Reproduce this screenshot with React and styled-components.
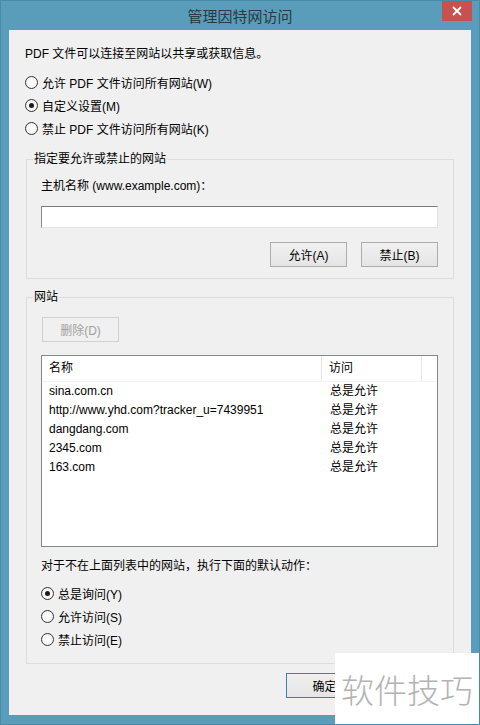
import React from 'react'
import styled, { createGlobalStyle } from 'styled-components';

const GlobalStyle = createGlobalStyle`
  html, body {
    margin: 0;
    padding: 0;
  }
  body {
    background: #5a9dba;
    font-family: "Liberation Sans", "Noto Sans CJK SC", sans-serif;
  }
`

const sites = [
  { name: 'sina.com.cn', access: '总是允许' },
  { name: 'http://www.yhd.com?tracker_u=7439951', access: '总是允许' },
  { name: 'dangdang.com', access: '总是允许' },
  { name: '2345.com', access: '总是允许' },
  { name: '163.com', access: '总是允许' },
];

const RadioOption = ({ checked, children }) => (
  <SRadioRow>
    <SRadio $checked={checked} />
    <span>{children}</span>
  </SRadioRow>
);

export default function App() {
  return (
    <>
      <GlobalStyle />
      <SWindow>
        <STitleBar>
          <span />
          <STitle>管理因特网访问</STitle>
          <SClose>
            <svg width="10" height="10" viewBox="0 0 10 10">
              <path d="M1 1 L9 9 M9 1 L1 9" stroke="#fff" strokeWidth="1.8" />
            </svg>
          </SClose>
        </STitleBar>
        <SClient>
          <SText>PDF 文件可以连接至网站以共享或获取信息。</SText>
          <SRadioList $top={9}>
            <RadioOption>允许 PDF 文件访问所有网站(W)</RadioOption>
            <RadioOption checked>自定义设置(M)</RadioOption>
            <RadioOption>禁止 PDF 文件访问所有网站(K)</RadioOption>
          </SRadioList>

          <SGroup $top={19} $bottom={11}>
            <SLegend>指定要允许或禁止的网站</SLegend>
            <SText $top={11}>主机名称 (www.example.com)：</SText>
            <SInput type="text" />
            <SButtonRow $top={14}>
              <SButton>允许(A)</SButton>
              <SButton>禁止(B)</SButton>
            </SButtonRow>
          </SGroup>

          <SGroup $top={18} $bottom={12}>
            <SLegend>网站</SLegend>
            <SButtonRow $top={12} $start>
              <SButton disabled>删除(D)</SButton>
            </SButtonRow>
            <SListBox>
              <SListHeader>
                <SHeadCell>名称</SHeadCell>
                <SHeadCell>访问</SHeadCell>
                <span />
              </SListHeader>
              {sites.map((site) => (
                <SListRow key={site.name}>
                  <SCell>{site.name}</SCell>
                  <SCell>{site.access}</SCell>
                </SListRow>
              ))}
            </SListBox>
            <SText $top={11}>对于不在上面列表中的网站，执行下面的默认动作：</SText>
            <SRadioList $top={8}>
              <RadioOption checked>总是询问(Y)</RadioOption>
              <RadioOption>允许访问(S)</RadioOption>
              <RadioOption>禁止访问(E)</RadioOption>
            </SRadioList>
          </SGroup>

          <SButtonRow $top={9}>
            <SButton $default>确定</SButton>
            <SButton aria-label="取消" />
          </SButtonRow>
        </SClient>
        <SWatermark>软件技巧</SWatermark>
      </SWindow>
    </>
  )
}

const SWindow = styled.div`
  position: relative;
  width: 480px;
  height: 725px;
  box-sizing: border-box;
  padding: 0 8px 9px;
  background: #5a9dba;
  border: 1px solid #4a8aa6;
  display: flex;
  flex-direction: column;
  overflow: hidden;
  color: #000;
  font-size: 12px;
`

const STitleBar = styled.div`
  height: 30px;
  flex: none;
  display: grid;
  grid-template-columns: 1fr auto 1fr;
  align-items: start;
  margin-top: -1px;
`

const STitle = styled.div`
  font-family: "Noto Sans CJK SC", sans-serif;
  font-size: 15px;
  line-height: 31px;
  color: #2a3a40;
`

const SClose = styled.div`
  justify-self: end;
  width: 30px;
  height: 21px;
  background: #c75050;
  display: flex;
  align-items: center;
  justify-content: center;
  margin-right: -1px;
`

const SClient = styled.div`
  flex: 1;
  background: #f0f0f0;
  padding: 16px 17px 0 16px;
  display: flex;
  flex-direction: column;
`

const SText = styled.div`
  line-height: 16px;
  margin-top: ${(p) => p.$top || 0}px;
`

const SRadioList = styled.div`
  margin-top: ${(p) => p.$top || 0}px;
  display: flex;
  flex-direction: column;
`

const SRadioRow = styled.div`
  height: 23px;
  display: flex;
  align-items: center;
  gap: 4px;
`

const SRadio = styled.span`
  width: 11px;
  height: 11px;
  border-radius: 50%;
  border: 1px solid #333;
  background: radial-gradient(circle, #fff 0%, #f0f0f0 100%);
  display: flex;
  align-items: center;
  justify-content: center;

  &::after {
    content: '';
    display: ${(p) => (p.$checked ? 'block' : 'none')};
    width: 5px;
    height: 5px;
    border-radius: 50%;
    background: #1a1a1a;
  }
`

const SGroup = styled.div`
  margin: ${(p) => p.$top || 0}px 0 0 1px;
  border: 1px solid #dcdcdc;
  padding: 0 15px ${(p) => p.$bottom || 9}px 14px;
  display: flex;
  flex-direction: column;
`

const SLegend = styled.div`
  align-self: flex-start;
  margin: -9px 0 0 -8px;
  padding: 0 1px;
  line-height: 16px;
  background: #f0f0f0;
`

const SInput = styled.input`
  margin: 12px 0 0;
  height: 22px;
  box-sizing: border-box;
  padding: 0 4px;
  background: #fff;
  border: 1px solid #e3e3e3;
  border-top-color: #7a7a7a;
  border-left-color: #8a8a8a;
  outline: none;
`

const SButtonRow = styled.div`
  margin-top: ${(p) => p.$top || 0}px;
  display: flex;
  justify-content: ${(p) => (p.$start ? 'flex-start' : 'flex-end')};
  gap: 14px;
  padding-left: ${(p) => (p.$start ? 1 : 0)}px;
`

const SButton = styled.button`
  width: 77px;
  height: 25px;
  box-sizing: border-box;
  padding: 0;
  font-family: "Liberation Sans", "Noto Sans CJK SC", sans-serif;
  font-size: 12px;
  color: #000;
  border: 1px solid ${(p) => (p.$default ? '#3c7fb1' : '#acacac')};
  background: linear-gradient(#f0f0f0, #e5e5e5);

  &:disabled {
    color: #a0a0a0;
    border-color: #d0d0d0;
    background: #f0f0f0;
  }
`

const SListBox = styled.div`
  margin-top: 13px;
  height: 192px;
  box-sizing: border-box;
  background: #fff;
  border: 1px solid #828790;
`

const SListHeader = styled.div`
  height: 25px;
  display: grid;
  grid-template-columns: 280px 100px 1fr;
  border-bottom: 1px solid #f4f4f4;

  & > * {
    border-right: 1px solid #e5e5e5;
  }
  & > :last-child {
    border-right: none;
  }
`

const SHeadCell = styled.div`
  padding-left: 7px;
  line-height: 25px;
`

const SListRow = styled.div`
  height: 19px;
  display: grid;
  grid-template-columns: 281px 1fr;
`

const SCell = styled.div`
  padding-left: 7px;
  line-height: 19px;
  white-space: nowrap;
`

const SWatermark = styled.div`
  position: absolute;
  right: 0;
  bottom: 0;
  width: 144px;
  height: 71px;
  background: #fff;
  display: flex;
  align-items: center;
  justify-content: center;
  font-family: "Noto Sans CJK SC", sans-serif;
  font-size: 33px;
  font-weight: 300;
  color: #b3b3b3;
`
